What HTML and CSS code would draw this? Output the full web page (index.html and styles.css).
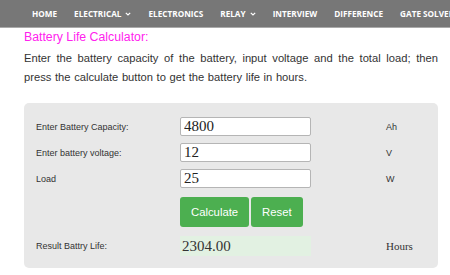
FILE: index.html
```html
<!DOCTYPE html>
<html lang="en">
<head>
    <meta charset="UTF-8">
    <meta name="viewport" content="width=device-width, initial-scale=1.0">
    <title>Battery Life Calculator</title>
    <link rel="stylesheet" href="styles.css">
</head>
<body>
    <nav class="topnav">
        <a href="#">Home</a>
        <a href="#">Electrical <svg class="caret" viewBox="0 0 6 4"><polyline points="0.8,0.8 3,3 5.2,0.8"/></svg></a>
        <a href="#">Electronics</a>
        <a href="#">Relay <svg class="caret" viewBox="0 0 6 4"><polyline points="0.8,0.8 3,3 5.2,0.8"/></svg></a>
        <a href="#">Interview</a>
        <a href="#">Difference</a>
        <a href="#">Gate Solved</a>
    </nav>

    <main>
        <h2 class="calc-title">Battery Life Calculator:</h2>
        <p class="intro">Enter the battery capacity of the battery, input voltage and the total load; then press the calculate button to get the battery life in hours.</p>

        <div class="calc">
            <label class="calc-label">Enter Battery Capacity:</label>
            <input class="calc-input" type="text" value="4800">
            <span class="unit">Ah</span>

            <label class="calc-label">Enter battery voltage:</label>
            <input class="calc-input" type="text" value="12">
            <span class="unit">V</span>

            <label class="calc-label">Load</label>
            <input class="calc-input" type="text" value="25">
            <span class="unit">W</span>

            <span></span>
            <div class="buttons">
                <button class="btn">Calculate</button>
                <button class="btn">Reset</button>
            </div>
            <span></span>

            <label class="calc-label">Result Battry Life:</label>
            <div class="result">2304.00</div>
            <span class="unit unit-serif">Hours</span>
        </div>
    </main>
</body>
</html>
```

FILE: styles.css
```css
body {
    margin: 0;
    font-family: "Liberation Sans", Arial, sans-serif;
    color: #333;
    background: #fff;
}

.topnav {
    display: flex;
    align-items: center;
    height: 27px;
    padding-left: 32px;
    gap: 17px;
    background: #777;
    border-bottom: 1px solid #aaa;
    white-space: nowrap;
    overflow: hidden;
}

.topnav a {
    color: #fff;
    text-decoration: none;
    text-transform: uppercase;
    font-family: "Open Sans", sans-serif;
    font-weight: bold;
    font-size: 8.2px;
    display: flex;
    align-items: center;
    gap: 4px;
}

.caret {
    width: 6px;
    height: 4px;
    fill: none;
    stroke: #fff;
    stroke-width: 1.2;
}

main {
    padding: 0 12px 0 24px;
}

.calc-title {
    margin: 2px 0 0;
    font-size: 12.3px;
    font-weight: normal;
    color: #f2e;
}

.intro {
    margin: 5px 0 0;
    font-size: 11.2px;
    word-spacing: 0.5px;
    line-height: 18.5px;
    text-align: justify;
}

.calc {
    margin-top: 17px;
    background: #e8e8e8;
    border-radius: 5px;
    padding: 14px 0 12px 12px;
    display: grid;
    grid-template-columns: 144px 131px 1fr;
    row-gap: 7px;
    align-items: center;
}

.calc-label {
    font-size: 9px;
}

.calc-input {
    box-sizing: border-box;
    width: 131px;
    height: 19px;
    margin: 0;
    padding: 0 3px;
    border: 1px solid #b5b5b5;
    border-radius: 2px;
    background: #fff;
    font-family: "Liberation Serif", "Times New Roman", serif;
    font-size: 15px;
    color: #222;
}

.unit {
    padding-left: 75px;
    font-size: 9px;
}

.unit-serif {
    font-family: "Liberation Serif", "Times New Roman", serif;
    font-size: 11px;
}

.buttons {
    display: flex;
    gap: 2px;
    margin: 2px 0;
}

.btn {
    height: 30px;
    padding: 0 11px;
    border: none;
    border-radius: 3px;
    background: #4caf50;
    color: #fff;
    font-family: "Liberation Sans", Arial, sans-serif;
    font-size: 11.3px;
}

.result {
    height: 20px;
    padding-left: 2px;
    background: #e2f1e2;
    font-family: "Liberation Serif", "Times New Roman", serif;
    font-size: 15px;
    line-height: 20px;
    color: #333;
}
```
